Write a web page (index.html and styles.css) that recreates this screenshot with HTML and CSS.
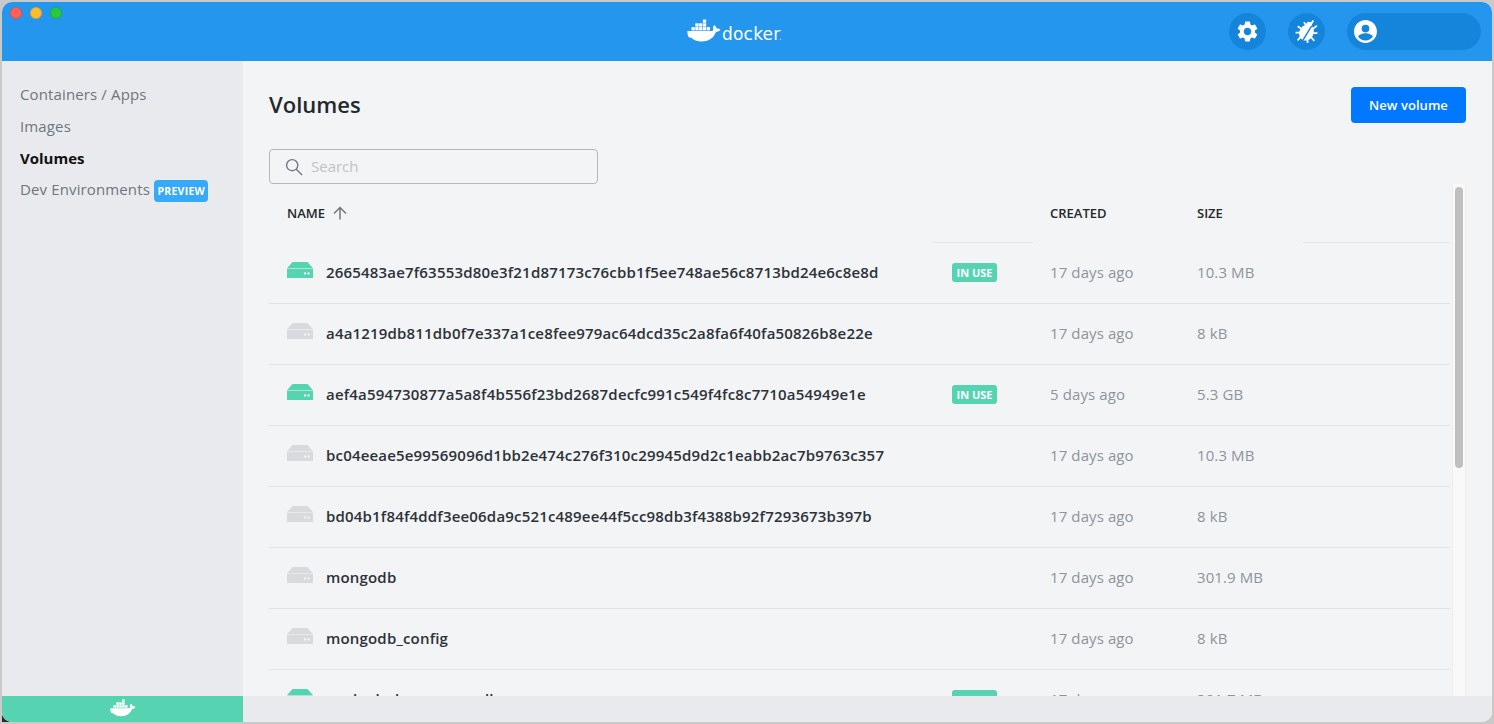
FILE: index.html
```html
<!DOCTYPE html>
<html lang="en">
<head>
<meta charset="utf-8">
<title>Docker Desktop</title>
<link rel="stylesheet" href="styles.css">
</head>
<body>
<svg class="defs" width="0" height="0" aria-hidden="true">
  <symbol id="whale" viewBox="0 0 34 25.500">
    <path d="M.3 12H24c1 0 2-.5 2.500-1-.7-1.300-.7-3 .2-4.200l.6-.7.8.6c1 .9 1.500 2 1.500 3 1-.4 2.300-.3 3.300.3l.4.2-.2.5c-.8 1.500-2.400 2.100-4 2-2.200 5.800-7 9.800-14.300 9.800-4.500 0-8.500-1.400-10.800-4C1.600 19.500.3 16 .3 12z"/>
    <rect x="4.500" y="8.100" width="3.300" height="3.300"/><rect x="8.300" y="8.100" width="3.300" height="3.300"/><rect x="12.100" y="8.100" width="3.300" height="3.300"/><rect x="15.900" y="8.100" width="3.300" height="3.300"/><rect x="19.700" y="8.100" width="3.300" height="3.300"/>
    <rect x="8.300" y="4.300" width="3.300" height="3.300"/><rect x="12.100" y="4.300" width="3.300" height="3.300"/><rect x="15.900" y="4.300" width="3.300" height="3.300"/>
    <rect x="15.900" y=".5" width="3.300" height="3.300"/>
  </symbol>
  <symbol id="volume" viewBox="0 0 26 16">
    <path d="M5.500 0h15L26 6.200H0z"/>
    <path fill-rule="evenodd" d="M0 6.800h26V16H0zM18 10.200a1.200 1.200 0 1 0 0 2.400 1.200 1.200 0 0 0 0-2.400zM21.500 10.200a1.200 1.200 0 1 0 0 2.400 1.200 1.200 0 0 0 0-2.400z"/>
  </symbol>
</svg>
<div class="window">
  <header class="titlebar">
    <div class="lights">
      <span class="light red"></span>
      <span class="light yellow"></span>
      <span class="light green"></span>
    </div>
    <div class="brand">
      <svg class="brand-whale"><use href="#whale"/></svg>
      <span class="brand-word">docker</span>
    </div>
    <div class="actions">
      <button class="round" aria-label="Settings">
        <svg viewBox="0 0 24 24"><path d="M19.140 12.940c.04-.3.06-.61.06-.94 0-.32-.02-.64-.07-.94l2.030-1.580c.18-.14.23-.41.12-.61l-1.920-3.320c-.12-.22-.37-.29-.59-.22l-2.390.96c-.5-.38-1.030-.7-1.620-.94l-.36-2.540c-.04-.24-.24-.41-.48-.41h-3.840c-.24 0-.43.17-.47.41l-.36 2.540c-.59.24-1.130.57-1.620.94l-2.390-.96c-.22-.08-.47 0-.59.22L2.740 8.870c-.12.21-.08.47.12.61l2.030 1.580c-.05.3-.09.63-.09.94s.02.64.07.94l-2.030 1.580c-.18.14-.23.41-.12.61l1.920 3.320c.12.22.37.29.59.22l2.390-.96c.5.38 1.030.7 1.620.94l.36 2.540c.05.24.24.41.48.41h3.840c.24 0 .44-.17.47-.41l.36-2.540c.59-.24 1.130-.56 1.620-.94l2.390.96c.22.08.47 0 .59-.22l1.920-3.320c.12-.22.07-.47-.12-.61l-2.010-1.580zM12 15.600c-1.980 0-3.600-1.620-3.600-3.600s1.620-3.600 3.600-3.600 3.600 1.620 3.600 3.600-1.620 3.600-3.600 3.600z"/></svg>
      </button>
      <button class="round" aria-label="Troubleshoot">
        <svg viewBox="0 0 24 24" class="bug">
          <ellipse cx="12" cy="13" rx="6.800" ry="8" transform="rotate(30 12 13)"/>
          <circle cx="14.500" cy="5.500" r="2.800"/>
          <path class="bug-legs" d="M9.500 3l2 3M18.500 1.500L16 5.500M3.500 7l4 2.500M22 6.500l-4 3M1.500 13h5M22.500 13.500h-4M3.500 20.500l3.500-4M19.500 21l-3-3.500M13 23v-3.500"/>
          <path class="bug-split" d="M17 6.500L8.500 20.500"/>
        </svg>
      </button>
      <div class="account">
        <svg viewBox="0 0 24 24"><path d="M12 1C5.930 1 1 5.930 1 12s4.930 11 11 11 11-4.930 11-11S18.070 1 12 1zm0 4.500a3.700 3.700 0 1 1 0 7.400 3.700 3.700 0 0 1 0-7.400zm0 15.200c-2.900 0-5.500-1.400-7-3.600.1-2.200 4.700-3.400 7-3.400s6.900 1.200 7 3.400c-1.500 2.200-4.100 3.600-7 3.600z"/></svg>
      </div>
    </div>
  </header>
  <div class="body">
    <nav class="sidebar">
      <a class="nav-item">Containers / Apps</a>
      <a class="nav-item">Images</a>
      <a class="nav-item active">Volumes</a>
      <a class="nav-item dev">Dev Environments<span class="preview">PREVIEW</span></a>
    </nav>
    <main class="main">
      <div class="page-head">
        <h1>Volumes</h1>
        <button class="primary">New volume</button>
      </div>
      <label class="search">
        <svg viewBox="0 0 20 20"><circle cx="8" cy="8" r="6.200"/><path d="M12.500 12.500L19 19"/></svg>
        <span>Search</span>
      </label>
      <div class="list">
        <div class="table">
          <div class="row head">
            <div class="cell c-name"><span>NAME</span><svg class="sort" viewBox="0 0 14 14"><path d="M7 13.500V1.500M1 7.500L7 1.500 13 7.500"/></svg></div>
            <div class="cell c-use"></div>
            <div class="cell c-created">CREATED</div>
            <div class="cell c-size">SIZE</div>
            <div class="cell c-rest"></div>
          </div>
          <div class="row">
            <div class="cell c-name"><svg class="vol on"><use href="#volume"/></svg>2665483ae7f63553d80e3f21d87173c76cbb1f5ee748ae56c8713bd24e6c8e8d</div>
            <div class="cell c-use"><span class="badge">IN USE</span></div>
            <div class="cell c-created">17 days ago</div>
            <div class="cell c-size">10.3 MB</div>
            <div class="cell c-rest"></div>
          </div>
          <div class="row">
            <div class="cell c-name"><svg class="vol"><use href="#volume"/></svg>a4a1219db811db0f7e337a1ce8fee979ac64dcd35c2a8fa6f40fa50826b8e22e</div>
            <div class="cell c-use"></div>
            <div class="cell c-created">17 days ago</div>
            <div class="cell c-size">8 kB</div>
            <div class="cell c-rest"></div>
          </div>
          <div class="row">
            <div class="cell c-name"><svg class="vol on"><use href="#volume"/></svg>aef4a594730877a5a8f4b556f23bd2687decfc991c549f4fc8c7710a54949e1e</div>
            <div class="cell c-use"><span class="badge">IN USE</span></div>
            <div class="cell c-created">5 days ago</div>
            <div class="cell c-size">5.3 GB</div>
            <div class="cell c-rest"></div>
          </div>
          <div class="row">
            <div class="cell c-name"><svg class="vol"><use href="#volume"/></svg>bc04eeae5e99569096d1bb2e474c276f310c29945d9d2c1eabb2ac7b9763c357</div>
            <div class="cell c-use"></div>
            <div class="cell c-created">17 days ago</div>
            <div class="cell c-size">10.3 MB</div>
            <div class="cell c-rest"></div>
          </div>
          <div class="row">
            <div class="cell c-name"><svg class="vol"><use href="#volume"/></svg>bd04b1f84f4ddf3ee06da9c521c489ee44f5cc98db3f4388b92f7293673b397b</div>
            <div class="cell c-use"></div>
            <div class="cell c-created">17 days ago</div>
            <div class="cell c-size">8 kB</div>
            <div class="cell c-rest"></div>
          </div>
          <div class="row">
            <div class="cell c-name"><svg class="vol"><use href="#volume"/></svg>mongodb</div>
            <div class="cell c-use"></div>
            <div class="cell c-created">17 days ago</div>
            <div class="cell c-size">301.9 MB</div>
            <div class="cell c-rest"></div>
          </div>
          <div class="row">
            <div class="cell c-name"><svg class="vol"><use href="#volume"/></svg>mongodb_config</div>
            <div class="cell c-use"></div>
            <div class="cell c-created">17 days ago</div>
            <div class="cell c-size">8 kB</div>
            <div class="cell c-rest"></div>
          </div>
          <div class="row">
            <div class="cell c-name"><svg class="vol on"><use href="#volume"/></svg>nucleohub_mongo_roll</div>
            <div class="cell c-use"><span class="badge">IN USE</span></div>
            <div class="cell c-created">17 days ago</div>
            <div class="cell c-size">301.7 MB</div>
            <div class="cell c-rest"></div>
          </div>
        </div>
        <div class="scrollbar"><div class="thumb"></div></div>
      </div>
    </main>
  </div>
  <footer class="footer">
    <div class="status"><svg><use href="#whale"/></svg></div>
  </footer>
</div>
</body>
</html>
```
FILE: styles.css
```css
* { box-sizing: border-box; }
html, body { height: 100%; }
body {
  margin: 0;
  padding: 2px;
  background: #c9c9c9;
  font-family: "Open Sans", sans-serif;
  overflow: hidden;
  position: relative;
}
body::before {
  content: "";
  position: absolute;
  left: 2px;
  bottom: 2px;
  width: 12px;
  height: 12px;
  background: #2a2a2a;
}
.defs { position: absolute; }
.window {
  position: relative;
  height: 720px;
  display: flex;
  flex-direction: column;
  border-radius: 10px;
  overflow: hidden;
  background: #f3f4f6;
}
.titlebar {
  height: 59px;
  flex: none;
  background: #2496ed;
  display: flex;
  align-items: center;
  position: relative;
}
.lights {
  position: absolute;
  left: 8px;
  top: 5px;
  display: flex;
  gap: 8px;
}
.light { width: 12px; height: 12px; border-radius: 50%; border: 1px solid rgba(0,0,0,.12); }
.red { background: #ff5f57; }
.yellow { background: #febc2e; }
.green { background: #28c840; }
.brand {
  position: absolute;
  left: 684.5px;
  top: 16.5px;
  display: flex;
  color: #fff;
}
.brand-whale { width: 34px; height: 25.5px; fill: #fff; }
.brand-word {
  position: relative;
  font-family: "DejaVu Sans", sans-serif;
  font-size: 17px;
  line-height: 20px;
  margin: 5px 0 0 1.5px;
  letter-spacing: .2px;
}
.brand-word::after {
  content: "";
  position: absolute;
  right: -1px;
  bottom: 4px;
  width: 1.5px;
  height: 1.5px;
  border-radius: 50%;
  background: #fff;
}
.actions {
  margin-left: auto;
  margin-right: 11px;
  display: flex;
  align-items: center;
  gap: 22px;
}
.round {
  width: 37px;
  height: 37px;
  padding: 0;
  border: 0;
  border-radius: 50%;
  background: #1585db;
  display: flex;
  align-items: center;
  justify-content: center;
}
.round svg { width: 25px; height: 25px; fill: #fff; }
.bug-legs { fill: none; stroke: #fff; stroke-width: 1.7; }
.bug-split { fill: none; stroke: #1585db; stroke-width: 1.4; }
.account {
  width: 134px;
  height: 37px;
  border-radius: 19px;
  background: #1585db;
  padding-left: 6px;
  display: flex;
  align-items: center;
}
.account svg { width: 25px; height: 25px; fill: #fff; }
.body { flex: 1; min-height: 0; display: flex; }
.sidebar {
  width: 241px;
  flex: none;
  background: #e9eaee;
  padding: 17px 0 0 18px;
  display: flex;
  flex-direction: column;
}
.nav-item {
  height: 32px;
  line-height: 32px;
  font-size: 15px;
  letter-spacing: .13px;
  color: #6e767d;
  display: flex;
  align-items: center;
}
.nav-item.active { color: #111; font-weight: 700; letter-spacing: 0; }
.nav-item.dev { margin-top: -1px; }
.preview {
  margin: 3px 0 0 4px;
  height: 22px;
  line-height: 22px;
  padding: 0 3.5px;
  border-radius: 4px;
  background: #36a9f7;
  color: #fff;
  font-size: 10.5px;
  font-weight: 700;
  letter-spacing: .25px;
}
.main {
  flex: 1;
  min-width: 0;
  display: flex;
  flex-direction: column;
  background: #f3f4f6;
  padding: 26px 26px 0 26px;
}
.page-head {
  height: 36px;
  flex: none;
  display: flex;
  align-items: center;
  justify-content: space-between;
}
h1 {
  margin: -3px 0 0;
  font-size: 22px;
  font-weight: 600;
  color: #22282c;
}
.primary {
  width: 115px;
  height: 36px;
  border: 0;
  border-radius: 4px;
  background: #0078ff;
  color: #fff;
  font-family: inherit;
  font-size: 13px;
  font-weight: 600;
  letter-spacing: .05px;
  padding: 0;
}
.search {
  margin-top: 26px;
  flex: none;
  width: 329px;
  height: 35px;
  border: 1px solid #b4b7ba;
  border-radius: 4px;
  padding: 0 0 2px 15px;
  display: flex;
  align-items: center;
  gap: 8px;
  color: #bfc3c7;
  font-size: 15px;
}
.search svg { width: 18px; height: 18px; fill: none; stroke: #6e767d; stroke-width: 1.5; margin-top: 2px; }
.list { flex: 1; min-height: 0; display: flex; overflow: hidden; }
.table { flex: 1; min-width: 0; }
.row { display: flex; height: 61px; font-size: 15px; letter-spacing: .1px; color: #8c949b; }
.row.head { height: 59px; color: #22282c; font-size: 13px; font-weight: 600; letter-spacing: 0; }
.cell {
  display: flex;
  align-items: center;
  border-bottom: 1px solid #e1e2e5;
  padding: 0 0 2px 17px;
}
.c-name { width: 664px; padding-left: 18px; color: #2b3238; font-weight: 600; letter-spacing: .18px; }
.c-use { width: 100px; padding-left: 19px; }
.c-created { width: 147px; }
.c-size { width: 123px; }
.c-rest { flex: 1; }
.row.head .cell { align-items: flex-start; padding-top: 20px; padding-bottom: 0; }
.row.head .c-name { color: #22282c; font-weight: 600; letter-spacing: 0; border-bottom-color: transparent; }
.row.head .c-created, .row.head .c-size { border-bottom-color: transparent; }
.sort { width: 14px; height: 14px; margin-left: 8px; margin-top: 2px; fill: none; stroke: #6e767d; stroke-width: 1.5; }
.vol { width: 26px; height: 16px; margin: 0 13px 4px 0; fill: #d8dade; flex: none; }
.vol.on { fill: #56d3b1; }
.badge {
  height: 19px;
  line-height: 19px;
  padding: 0 4.5px;
  border-radius: 3px;
  background: #56d3b1;
  color: #fff;
  font-size: 11px;
  font-weight: 700;
  letter-spacing: 0;
}
.scrollbar {
  width: 14px;
  flex: none;
  margin-left: 2px;
  padding: 3px 2px 0;
  background: #f9f9fa;
  border-left: 1px solid #eeeef0;
  border-right: 1px solid #eeeef0;
}
.thumb { height: 281px; width: 8px; border-radius: 4px; background: #bfbfbf; }
.footer { height: 26px; flex: none; background: #e9eaee; }
.status {
  width: 241px;
  height: 100%;
  background: #56d3b1;
  display: flex;
  align-items: center;
  justify-content: center;
}
.status svg { width: 26px; height: 19.5px; fill: #fff; }
```
